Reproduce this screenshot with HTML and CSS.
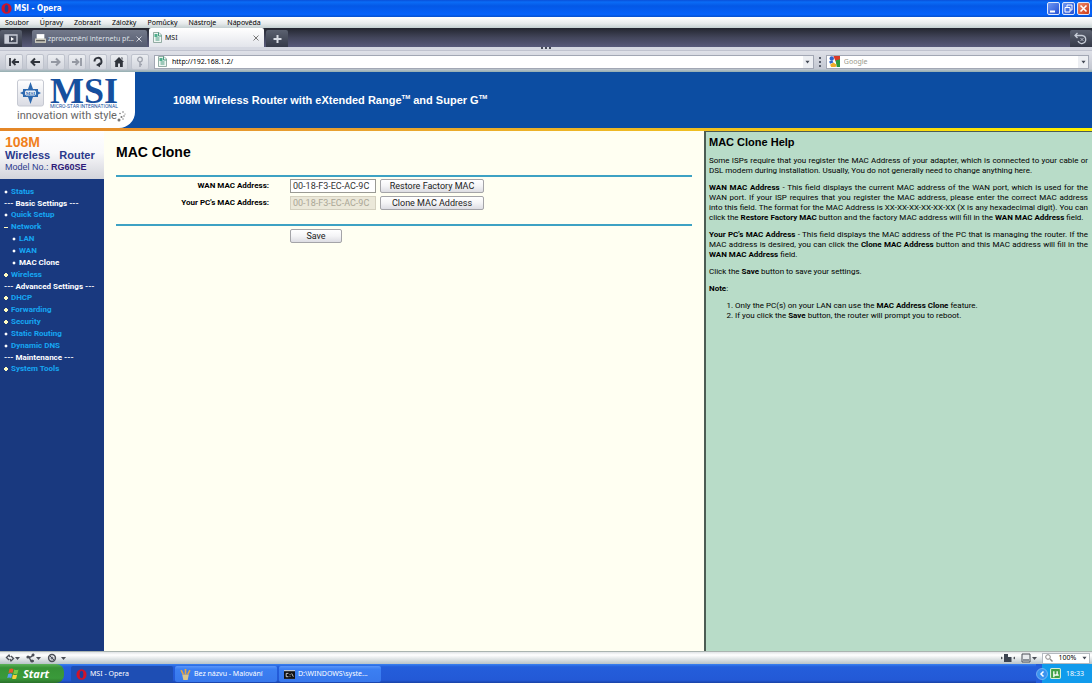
FILE: index.html
```html
<!DOCTYPE html>
<html lang="en">
<head>
<meta charset="utf-8">
<title>MSI - Opera</title>
<link rel="stylesheet" href="styles.css">
</head>
<body>
<svg class="defs" width="0" height="0" aria-hidden="true">
  <symbol id="opera" viewBox="0 0 12 12"><ellipse cx="6" cy="6" rx="5.5" ry="5.8" fill="#d0142a"/><ellipse cx="6" cy="6" rx="2" ry="4" fill="#1c3f9c"/></symbol>
  <symbol id="page" viewBox="0 0 10 11"><path d="M1 .5h5.500L9 3v7.500H1z" fill="#eef6f2" stroke="#7c9a90" stroke-width=".8"/><path d="M6 .5V4h3M3 6h4M3 8h4" stroke="#4a9a80" fill="none"/><path d="M2 2h3v3H2z" fill="#4fae8c"/></symbol>
  <symbol id="caret" viewBox="0 0 6 4"><path d="M0.500 .5h5L3 3.800z" fill="#444a55"/></symbol>
</svg>
<header class="titlebar">
  <svg class="i10"><use href="#opera"/></svg>
  <span class="title">MSI - Opera</span>
  <div class="winbtns">
    <button class="win" aria-label="Minimize"><svg viewBox="0 0 13 13"><path d="M3 9.500h5" stroke="#fff" stroke-width="2"/></svg></button>
    <button class="win" aria-label="Restore"><svg viewBox="0 0 13 13"><path d="M5 5V3h5v5H8M3 5.500h5v4.500H3z" stroke="#fff" fill="none"/></svg></button>
    <button class="win close" aria-label="Close"><svg viewBox="0 0 13 13"><path d="M3.500 3.500l6 6M9.500 3.500l-6 6" stroke="#fff" stroke-width="1.600"/></svg></button>
  </div>
</header>
<nav class="menubar"><a href="#">Soubor</a><a href="#">Úpravy</a><a href="#">Zobrazit</a><a href="#">Záložky</a><a href="#">Pomůcky</a><a href="#">Nástroje</a><a href="#">Nápověda</a></nav>
<div class="tabbar">
  <button class="dark panel" aria-label="Panels"><svg viewBox="0 0 14 10"><path d="M1 1h12v8H1z" fill="none" stroke="#c8ccd6" stroke-width="1.300"/><path d="M1 1h4v8H1z" fill="#c8ccd6"/><path d="M7 3l3 2-3 2z" fill="#fff"/></svg></button>
  <div class="tab"><svg class="i10" viewBox="0 0 10 10"><path d="M1.500 1h7v5h-7z" fill="#fff"/><path d="M0 5h10v4H0z" fill="#c9c8bd"/><path d="M1 7h8" stroke="#444"/></svg><span class="label">zprovoznění internetu př…</span><svg class="x" viewBox="0 0 6 6"><path d="M.5.5l5 5M5.500.5l-5 5" stroke="#d0d3dc"/></svg></div>
  <div class="tab active"><svg class="i10"><use href="#page"/></svg><span class="label">MSI</span><svg class="x" viewBox="0 0 6 6"><path d="M.5.5l5 5M5.500.5l-5 5" stroke="#777"/></svg></div>
  <button class="dark" aria-label="New tab"><svg viewBox="0 0 10 10"><path d="M5 1v8M1 5h8" stroke="#d8dce4" stroke-width="2"/></svg></button>
  <button class="dark trash" aria-label="Closed tabs"><svg viewBox="0 0 14 12"><path d="M1 3h7a4 4 0 1 1-4 5.500M3.500.5L1 3l2.500 2.500" fill="none" stroke="#c8ced8" stroke-width="1.300"/><path d="M6.500 5.500l3 3M9.500 5.500l-3 3" stroke="#c8ced8" stroke-width=".8"/></svg></button>
</div>
<div class="grip"><i></i><i></i><i></i></div>
<div class="addressbar">
  <div class="navs">
  <button class="nav" aria-label="Rewind"><svg viewBox="0 0 12 12"><path d="M2 2v8M11 6H5M7.500 3L4.500 6l3 3" fill="none" stroke="#30343c" stroke-width="1.800"/></svg></button>
  <button class="nav" aria-label="Back"><svg viewBox="0 0 12 12"><path d="M11 6H3M6 2.500L2.500 6 6 9.500" fill="none" stroke="#30343c" stroke-width="2"/></svg></button>
  <button class="nav" aria-label="Forward"><svg viewBox="0 0 12 12"><path d="M1 6h8M6 2.500L9.500 6 6 9.500" fill="none" stroke="#9498a2" stroke-width="2"/></svg></button>
  <button class="nav" aria-label="Fast forward"><svg viewBox="0 0 12 12"><path d="M10 2v8M1 6h6M4.500 3l3 3-3 3" fill="none" stroke="#9498a2" stroke-width="1.800"/></svg></button>
  <button class="nav" aria-label="Reload"><svg viewBox="0 0 12 12"><path d="M2.500 5.500a3.500 3.500 0 1 1 4.500 3.200" fill="none" stroke="#30343c" stroke-width="1.900"/><path d="M8 6.200v5L4 9z" fill="#30343c"/></svg></button>
  <button class="nav" aria-label="Home"><svg viewBox="0 0 12 12"><path d="M6 1l5 5H9.800v5H7V7.500H5V11H2.200V6H1zM8 1.500h1.500V4z" fill="#30343c"/></svg></button>
  <button class="nav" aria-label="Wand"><svg viewBox="0 0 12 12"><circle cx="6" cy="3.500" r="2.300" fill="none" stroke="#a0a4ae" stroke-width="1.300"/><path d="M6 6v5M6 8.500h2" stroke="#a0a4ae" stroke-width="1.500"/></svg></button>
  </div>
  <div class="field url"><svg class="i10"><use href="#page"/></svg><input aria-label="Address" value="http://192.168.1.2/"><button class="drop" aria-label="History"><svg class="car"><use href="#caret"/></svg></button></div>
  <div class="dots"></div>
  <div class="field search"><svg class="i10" viewBox="0 0 10 10"><path d="M0 0h5v10H0z" fill="#fff"/><path d="M4 0h6v4L6 5z" fill="#d83a28"/><path d="M6 4l4-1v7H7z" fill="#2c9b3f"/><circle cx="2.500" cy="2.300" r="2" fill="#2f62c8"/><path d="M1 8l3-2 3 2-1 2H2z" fill="#efad28"/><path d="M0 5l3-1 1 2-3 1z" fill="#2f62c8"/></svg><input aria-label="Search" placeholder="Google"><button class="drop" aria-label="Search engines"><svg class="car"><use href="#caret"/></svg></button></div>
</div>
<div class="banner">
  <div class="brand">
    <div class="brandrow">
      <svg class="emblem" viewBox="0 0 27 27"><defs><linearGradient id="eg" x2="0" y2="1"><stop stop-color="#fff"/><stop offset="1" stop-color="#d9dbe3"/></linearGradient></defs><rect x=".5" y=".5" width="26" height="26" rx="2" fill="url(#eg)" stroke="#c6c9d2"/><path d="M13.500 2.500l2.500 7h5v2.500l3 1.500-3 1.500v2.500h-5l-2.500 7-2.500-7H6V15l-3-1.500L6 12V9.500h5z" fill="#2c68ae"/><rect x="7.500" y="10.500" width="12" height="6" rx="2" fill="#e8eff8" stroke="#2c68ae"/><text x="13.500" y="15.500" text-anchor="middle" class="emtext">MSI</text></svg>
      <div class="wordmark"><span class="msi">MSI</span><span class="micro">MICRO-STAR INTERNATIONAL</span></div>
    </div>
    <div class="slogan">innovation with style<svg viewBox="0 0 9 13"><g fill="#777"><circle cx="2" cy="11" r="1.500"/><circle cx="4.500" cy="8" r="1"/><circle cx="7" cy="7" r=".8"/><circle cx="3" cy="4.500" r=".8"/><circle cx="6" cy="3" r=".8"/><circle cx="8" cy="5" r=".6"/><circle cx="6" cy="10" r=".7"/></g></svg></div>
  </div>
  <div class="product">108M Wireless Router with eXtended Range<sup>TM</sup> and Super G<sup>TM</sup></div>
</div>
<div class="stripe"></div>
<main class="frames">
  <aside class="side">
    <div class="model"><b class="speed">108M</b><b class="kind">Wireless&nbsp;&nbsp; Router</b><span class="no">Model No.: <b>RG60SE</b></span></div>
    <ul class="tree">
      <li class="dot"><a href="#">Status</a></li>
      <li class="head">--- Basic Settings ---</li>
      <li class="dot"><a href="#">Quick Setup</a></li>
      <li class="minus"><a href="#">Network</a></li>
      <li class="dot sub"><a href="#">LAN</a></li>
      <li class="dot sub"><a href="#">WAN</a></li>
      <li class="dot sub"><a href="#" class="current">MAC Clone</a></li>
      <li class="plus"><a href="#">Wireless</a></li>
      <li class="head">--- Advanced Settings ---</li>
      <li class="plus"><a href="#">DHCP</a></li>
      <li class="plus"><a href="#">Forwarding</a></li>
      <li class="plus"><a href="#">Security</a></li>
      <li class="dot"><a href="#">Static Routing</a></li>
      <li class="dot"><a href="#">Dynamic DNS</a></li>
      <li class="head">--- Maintenance ---</li>
      <li class="plus"><a href="#">System Tools</a></li>
    </ul>
  </aside>
  <section class="content">
    <h1>MAC Clone</h1>
    <form class="form">
      <div class="row"><label for="wan">WAN MAC Address:</label><input id="wan" value="00-18-F3-EC-AC-9C"><button type="button">Restore Factory MAC</button></div>
      <div class="row"><label for="pc">Your PC's MAC Address:</label><input id="pc" value="00-18-F3-EC-AC-9C" disabled><button type="button">Clone MAC Address</button></div>
    </form>
    <button class="save">Save</button>
  </section>
  <section class="help">
    <h2>MAC Clone Help</h2>
    <p>Some ISPs require that you register the MAC Address of your adapter, which is connected to your cable or DSL modem during installation. Usually, You do not generally need to change anything here.</p>
    <p><b>WAN MAC Address</b> - This field displays the current MAC address of the WAN port, which is used for the WAN port. If your ISP requires that you register the MAC address, please enter the correct MAC address into this field. The format for the MAC Address is XX-XX-XX-XX-XX-XX (X is any hexadecimal digit). You can click the <b>Restore Factory MAC</b> button and the factory MAC address will fill in the <b>WAN MAC Address</b> field.</p>
    <p><b>Your PC's MAC Address</b> - This field displays the MAC address of the PC that is managing the router. If the MAC address is desired, you can click the <b>Clone MAC Address</b> button and this MAC address will fill in the <b>WAN MAC Address</b> field.</p>
    <p>Click the <b>Save</b> button to save your settings.</p>
    <p><b>Note</b>:</p>
    <ol>
      <li>Only the PC(s) on your LAN can use the <b>MAC Address Clone</b> feature.</li>
      <li>If you click the <b>Save</b> button, the router will prompt you to reboot.</li>
    </ol>
  </section>
</main>
<div class="status">
  <svg class="st" viewBox="0 0 16 10"><path d="M1 5l3-3 1 2M9 5L6 8 5 6M2 5l2 2M6 3l2 2" fill="none" stroke="#4a4e56" stroke-width="1.300"/><path d="M10 4h5l-2.500 3z" fill="#4a4e56"/></svg>
  <svg class="st" viewBox="0 0 16 10"><path d="M1 4h4M3 4l2 4h3M5 4l3-3" fill="none" stroke="#4a4e56" stroke-width="1.300"/><circle cx="2" cy="4" r="1.600" fill="#4a4e56"/><circle cx="7" cy="2" r="1.500" fill="#4a4e56"/><circle cx="6" cy="8" r="1.500" fill="#4a4e56"/><path d="M10 4h5l-2.500 3z" fill="#4a4e56"/></svg>
  <svg class="st wide" viewBox="0 0 20 10"><circle cx="5" cy="5" r="3.400" fill="none" stroke="#4a4e56" stroke-width="1.500"/><circle cx="5" cy="5" r="1.500" fill="#6c7080"/><path d="M2.500 2.500l5 5" stroke="#4a4e56"/><path d="M14 4h5l-2.500 3z" fill="#4a4e56"/></svg>
  <svg class="st fit" viewBox="0 0 16 10"><path d="M1 3.500v3L3 5zM15 3.500v3L13 5z" fill="#4a4e56"/><path d="M4 1h4v3h3.500v5H4z" fill="#3c4450"/></svg>
  <svg class="st" viewBox="0 0 16 10"><path d="M1 1h8v8H1z" fill="#e8ebee" stroke="#4a4e56"/><path d="M2 6h6v2H2z" fill="#8a9098"/><path d="M11 4h5l-2.500 3z" fill="#4a4e56"/></svg>
  <button class="zoom"><svg class="mag" viewBox="0 0 8 8"><circle cx="3" cy="3" r="2.300" fill="none" stroke="#888"/><path d="M5 5l2.500 2.500" stroke="#888" stroke-width="1.400"/></svg>100%<svg class="car"><use href="#caret"/></svg></button>
</div>
<footer class="taskbar">
  <button class="start"><svg viewBox="0 0 13 12"><path d="M2.500 1.500q2-1 4 0L5.500 5.500q-2-1-4 0z" fill="#e8582c"/><path d="M7.300 2q2 1 4.200 0l-1 4q-2 1-4.200 0z" fill="#7cc944"/><path d="M1.200 6.500q2-1 4 0l-1 4q-2-1-4 0z" fill="#5a9df0"/><path d="M6 7q2 1 4.200 0l-1 4q-2 1-4.200 0z" fill="#f8cf3a"/></svg>Start</button>
  <button class="task on"><svg class="i10"><use href="#opera"/></svg>MSI - Opera</button>
  <button class="task"><svg class="i10" viewBox="0 0 10 10"><path d="M2 5h6l-1 5H3z" fill="#d9c48c"/><path d="M3 5L1 1M5 5V0M7 5l2-4" stroke="#e9a640" stroke-width="1.500"/></svg>Bez názvu - Malování</button>
  <button class="task"><svg class="i10" viewBox="0 0 10 10"><path d="M0 1h10v8H0z" fill="#c8ccd2"/><path d="M0 2h10v7H0z" fill="#111"/><path d="M4 4H2v3h2M5.500 4.500v.8M5.500 6.200V7M7 4l1.500 3" fill="none" stroke="#ddd" stroke-width=".8"/></svg>D:\WINDOWS\syste...</button>
  <div class="tray"><svg class="chev" viewBox="0 0 12 12"><circle cx="6" cy="6" r="5.500" fill="#3a93f0" stroke="#9fcdfa" stroke-width=".6"/><path d="M7.500 3.500L5 6l2.500 2.500" fill="none" stroke="#fff" stroke-width="1.500"/></svg><svg class="i10" viewBox="0 0 10 10"><rect x=".5" y=".5" width="9" height="9" rx="1" fill="#3fa046" stroke="#d9efd5"/><path d="M3.500 8.500V3v2.500q0 1 1.500 1T6.500 5V3v3.500H8" fill="none" stroke="#fff" stroke-width="1.200"/></svg><span class="clock">18:33</span></div>
</footer>
</body>
</html>
```
FILE: styles.css
```css
* { box-sizing: border-box; }
html { height: 100%; }
body { margin: 0; min-height: 100%; display: flex; flex-direction: column; font: 7px/10px "Noto Sans", sans-serif; color: #000; }
button, input { font: inherit; color: inherit; margin: 0; padding: 0; border: 0; background: none; }
button { display: flex; align-items: center; justify-content: center; }
a { text-decoration: none; color: inherit; }
svg { display: block; flex: none; }
.defs { position: absolute; }
.i10 { width: 11px; height: 11px; }
.car { width: 5px; height: 4px; }

.titlebar { height: 17px; display: flex; align-items: center; gap: 2px; padding: 0 2px 0 1px; background: linear-gradient(#0a4fd8, #0a6cf6 12%, #0458e6 35%, #0562fa 85%, #0650cc); color: #fff; }
.title { font: bold 8px/12px "DejaVu Sans Condensed", sans-serif; }
.winbtns { margin-left: auto; display: flex; gap: 2px; }
.win { width: 13px; height: 13px; border: 1px solid #dfe8fb; border-radius: 2px; background: linear-gradient(135deg, #6f97f3, #2450d4); }
.win svg { width: 13px; height: 13px; }
.close { background: linear-gradient(135deg, #ef8d6c, #cf3a16); }

.menubar { height: 11px; display: flex; gap: 11px; padding: 0 5px; align-items: center; background: linear-gradient(#fff, #e6eaeb 60%, #c3cfd0); }

.tabbar { height: 19px; display: flex; align-items: flex-end; gap: 2px; background: linear-gradient(#23262f, #42455a 50%, #585a7a); }
.dark { width: 22px; height: 17px; border-radius: 2px 2px 0 0; background: linear-gradient(#5b6170, #353a48); }
.dark svg { width: 11px; height: 10px; }
.panel { margin-right: 8px; }
.panel svg { width: 14px; }
.trash { margin-left: auto; }
.trash svg { width: 14px; height: 13px; }
.tab { width: 115px; height: 17px; display: flex; align-items: center; gap: 2px; padding: 0 5px 0 3px; border-radius: 2px 2px 0 0; background: linear-gradient(#73798a, #545b70); color: #dfe2e8; }
.tab .label { flex: 1; white-space: nowrap; }
.tab .x { width: 6px; height: 6px; }
.active { height: 19px; background: linear-gradient(#fff, #e3e5eb); color: #111; }

.grip { height: 4px; display: flex; justify-content: center; gap: 2px; background: #d5d8e1; border-bottom: 1px solid #c0c3cf; }
.grip i { width: 2px; height: 2px; background: #444958; }

.addressbar { height: 21px; display: flex; align-items: center; gap: 5px; padding: 0 3px 0 5px; background: linear-gradient(#dfe1e8, #c3c7d1 85%, #93aeb0); }
.navs { display: flex; gap: 3px; }
.nav { width: 18px; height: 16px; border: 1px solid #bfc3cd; border-radius: 2px; background: linear-gradient(#eceef2, #d2d5dd); }
.nav svg { width: 12px; height: 12px; }
.field { height: 14px; display: flex; align-items: center; gap: 4px; padding-left: 2px; border: 1px solid #a2a7b4; background: #fff; }
.field input { flex: 1; min-width: 0; outline: 0; }
.url { flex: 663; }
.search { flex: 262; }
.search input::placeholder { color: #9a9a8c; opacity: 1; }
.drop { width: 10px; height: 12px; background: #eceef2; }
.dots { width: 2px; height: 10px; background: repeating-linear-gradient(#5a5f6c 0 2px, transparent 2px 4px); }

.banner { height: 56px; display: flex; align-items: stretch; background: #0c4da2; font-family: "Liberation Sans", sans-serif; }
.brand { width: 135px; padding: 7px 0 0 17px; background: #fff; border-radius: 0 0 16px 0; }
.brandrow { display: flex; gap: 6px; }
.emblem { width: 27px; height: 28px; }
.emtext { font: bold 5px "Liberation Serif", serif; fill: #2c68ae; }
.wordmark { display: flex; flex-direction: column; color: #164f9e; }
.msi { font: bold 36px/24px "Liberation Serif", serif; }
.micro { font: 5px/6px Roboto, sans-serif; white-space: nowrap; }
.slogan { display: flex; align-items: center; font: 11px/13px Roboto, sans-serif; color: #666; white-space: nowrap; }
.slogan svg { width: 9px; height: 13px; }
.product { align-self: center; padding-left: 38px; color: #fff; font: bold 11px/14px "Liberation Sans", sans-serif; }
.product sup { font-size: 6px; line-height: 6px; }
.stripe { height: 3px; background: linear-gradient(90deg, #e48627, #e8a030 30%, #f0c020 65%, #fff200); }

.frames { flex: 1; display: grid; grid-template-columns: 104px minmax(0, 1fr) 388px; font-family: "Liberation Sans", sans-serif; }
.side { background: #19397f; color: #fff; font: bold 8px/12px Roboto, sans-serif; }
.model { height: 48px; display: flex; flex-direction: column; padding: 4px 5px 0; background: linear-gradient(#fff, #f8f8fa 45%, #d3d4db); color: #2b3a8c; font-family: "Liberation Sans", sans-serif; white-space: nowrap; }
.speed { font-size: 14px; line-height: 14px; color: #f0801c; }
.kind { font-size: 11px; line-height: 12px; }
.no { font-size: 9px; line-height: 12px; font-weight: normal; }
.no b { color: #2e1a78; }
.tree { list-style: none; margin: 0; padding: 7px 0 0 4px; }
.tree li { line-height: 12px; display: flex; align-items: center; gap: 3px; white-space: nowrap; }
.tree .head { line-height: 11px; }
.tree .sub { padding-left: 8px; }
.tree a { color: #16a6f2; }
.tree .current { color: #fff; }
.tree li:not(.head)::before { content: ""; width: 4px; height: 4px; flex: none; }
.tree .dot::before { background: radial-gradient(#fff 45%, transparent 60%); }
.tree .plus::before { background: linear-gradient(#fffbc0, #fffbc0) 50% / 4px 2px no-repeat, linear-gradient(#fffbc0, #fffbc0) 50% / 2px 4px no-repeat; }
.tree .minus::before { background: linear-gradient(#fffbc0, #fffbc0) 50% / 4px 1px no-repeat; }

.content { background: #fffff2; padding: 13px 12px; }
h1 { margin: 0; font-size: 14px; line-height: 16px; }
.form { margin: 15px 0 3px; padding: 2px 0 14px; border: solid #3da2c4; border-width: 2px 0; display: flex; flex-direction: column; gap: 3px; }
.row { display: grid; grid-template-columns: 170px 86px 104px; column-gap: 4px; align-items: center; }
.row label { margin-right: 17px; font: bold 8px/10px Roboto, sans-serif; text-align: right; }
.row input { height: 14px; padding: 0 2px; border: 1px solid #9a9a94; background: #fff; font: 9px/12px Roboto, sans-serif; color: #333; }
.row input:disabled { background: #ebe8d9; border-color: #d4d0bf; color: #aaa696; }
.row button, .save { height: 14px; border: 1px solid #a4a4a8; border-radius: 2px; background: linear-gradient(#fff, #f4f4f6 50%, #dddde3); color: #222; font: 9px/12px Roboto, sans-serif; }
.save { width: 52px; margin-left: 174px; }

.help { background: #b8dcc8; border: solid #4c5c54; border-width: 1px 0 0 2px; padding: 3px 4px 4px 3px; font: 8px/10px Roboto, sans-serif; }
.help h2 { margin: 0 0 6px; font: bold 11px/15px "Liberation Sans", sans-serif; }
.help p { margin: 0 0 7px; text-align: justify; }
.help ol { margin: 0; padding-left: 26px; }

.status { height: 13px; display: flex; align-items: center; gap: 5px; padding: 0 2px 0 5px; background: linear-gradient(#dfe3e5, #fff 25%, #b9c4c8); border-top: 1px solid #aab4b0; }
.st { width: 16px; height: 10px; }
.wide { width: 20px; }
.fit { margin-left: auto; }
.zoom { width: 48px; height: 11px; padding: 0 2px; justify-content: space-between; background: #fff; border: 1px solid #b4bac0; }
.mag { width: 8px; height: 8px; }

.taskbar { height: 19px; display: flex; align-items: stretch; gap: 2px; color: #fff; background: linear-gradient(#3a82f0, #245edb 15%, #2359d6 85%, #1941a5); }
.start { width: 64px; margin-right: 5px; gap: 3px; justify-content: flex-start; padding-left: 7px; border-radius: 0 8px 8px 0; background: linear-gradient(#5db35a, #379336 20%, #3a9a3a 75%, #2a7029); font: italic bold 11px/14px "Open Sans", sans-serif; }
.start svg { width: 13px; height: 13px; }
.task { width: 102px; margin: 2px 0 1px; gap: 3px; justify-content: flex-start; padding-left: 5px; border-radius: 2px; background: linear-gradient(#5a96fa, #3c7ff2 20%, #3878ec); white-space: nowrap; }
.on { background: #1e4eb4; }
.tray { margin-left: auto; display: flex; align-items: center; gap: 2px; padding: 0 8px 0 0; background: linear-gradient(90deg, #245edb 6px, #119bec 6px); }
.chev { width: 12px; height: 12px; }
.clock { padding-left: 3px; }
```
